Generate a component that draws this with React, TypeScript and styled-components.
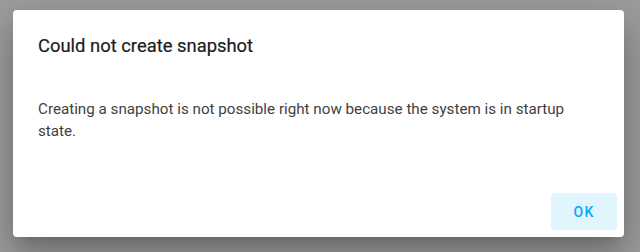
import React from "react";
import styled, { createGlobalStyle } from "styled-components";

const Global = createGlobalStyle`
  html, body { margin: 0; padding: 0; }
  body {
    width: 640px;
    height: 252px;
    background: #9e9e9e;
    font-family: Roboto, "Noto Sans", sans-serif;
    overflow: hidden;
  }
`;

const Scrim = styled.div`
  width: 640px;
  height: 252px;
  box-sizing: border-box;
  padding: 10px 16px 15px 13px;
  display: flex;
`;

const Dialog = styled.div`
  flex: 1;
  background: #ffffff;
  border-radius: 4px;
  box-shadow: 0 11px 15px -7px rgba(0,0,0,0.2), 0 24px 38px 3px rgba(0,0,0,0.14), 0 9px 46px 8px rgba(0,0,0,0.12);
  display: flex;
  flex-direction: column;
`;

const Title = styled.h2`
  margin: 0;
  padding: 20px 24px 0 25px;
  font-size: 18.4px;
  line-height: 32px;
  font-weight: 400;
  color: #1c1c1c;
  letter-spacing: 0;
  -webkit-text-stroke: 0.2px #1c1c1c;
`;

const Content = styled.div`
  padding: 36px 24px 0 25px;
  font-size: 15.2px;
  line-height: 22px;
  color: #3f3f3f;
  letter-spacing: 0;
  flex: 1;
`;

const Actions = styled.div`
  display: flex;
  justify-content: flex-end;
  padding: 0 7px 7px;
`;

const Button = styled.button`
  width: 66px;
  height: 37px;
  border: none;
  border-radius: 4px;
  background: #e1f5fe;
  color: #03a9f4;
  font-family: Roboto, sans-serif;
  font-size: 14px;
  font-weight: 500;
  letter-spacing: 0.09em;
  text-transform: uppercase;
  cursor: pointer;
`;

export default function App() {
  return (
    <>
      <Global />
      <Scrim>
        <Dialog>
          <Title>Could not create snapshot</Title>
          <Content>
            Creating a snapshot is not possible right now because the system is in startup state.
          </Content>
          <Actions>
            <Button>OK</Button>
          </Actions>
        </Dialog>
      </Scrim>
    </>
  );
}
